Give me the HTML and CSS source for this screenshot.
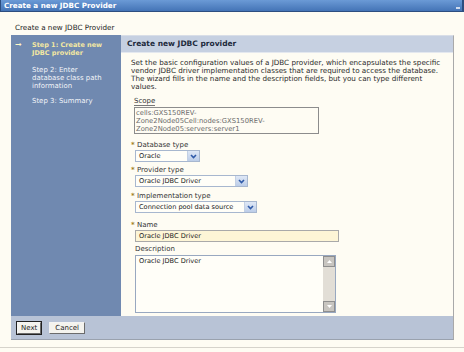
FILE: index.html
```html
<!DOCTYPE html>
<html>
<head>
<meta charset="utf-8">
<link rel="stylesheet" href="styles.css">
</head>
<body>
<div class="titlebar"><span>Create a new JDBC Provider</span><span class="tb-btn"></span></div>
<div class="subtitle">Create a new JDBC Provider</div>
<div class="wizard">
  <div class="wizard-body">
    <div class="sidebar">
      <div class="step current"><span class="arrow">&#10142;</span><span>Step 1: Create new JDBC provider</span></div>
      <div class="step"><span class="arrow"></span><span>Step 2: Enter database class path information</span></div>
      <div class="step"><span class="arrow"></span><span>Step 3: Summary</span></div>
    </div>
    <div class="main">
      <div class="main-header">Create new JDBC provider</div>
      <div class="content">
        <p class="intro">Set the basic configuration values of a JDBC provider, which encapsulates the specific vendor JDBC driver implementation classes that are required to access the database. The wizard fills in the name and the description fields, but you can type different values.</p>
        <div class="field scope">
          <div class="label plain"><span class="u">Scope</span></div>
          <div class="scopebox">cells:GXS150REV-<br>Zone2Node05Cell:nodes:GXS150REV-<br>Zone2Node05:servers:server1</div>
        </div>
        <div class="field f-db">
          <div class="label"><span class="req">*</span>Database type</div>
          <div class="select w-db"><span class="val">Oracle</span><span class="dd"><svg width="7" height="5" viewBox="0 0 7 5"><path d="M1 1 L3.5 3.5 L6 1" fill="none" stroke="#2f5aa8" stroke-width="1.6"/></svg></span></div>
        </div>
        <div class="field f-prov">
          <div class="label"><span class="req">*</span>Provider type</div>
          <div class="select w-prov"><span class="val">Oracle JDBC Driver</span><span class="dd"><svg width="7" height="5" viewBox="0 0 7 5"><path d="M1 1 L3.5 3.5 L6 1" fill="none" stroke="#2f5aa8" stroke-width="1.6"/></svg></span></div>
        </div>
        <div class="field f-impl">
          <div class="label"><span class="req">*</span>Implementation type</div>
          <div class="select w-impl"><span class="val">Connection pool data source</span><span class="dd"><svg width="7" height="5" viewBox="0 0 7 5"><path d="M1 1 L3.5 3.5 L6 1" fill="none" stroke="#2f5aa8" stroke-width="1.6"/></svg></span></div>
        </div>
        <div class="field f-name">
          <div class="label"><span class="req">*</span>Name</div>
          <div class="input">Oracle JDBC Driver</div>
        </div>
        <div class="field f-desc">
          <div class="label plain">Description</div>
          <div class="textarea">
            <div class="ta-text">Oracle JDBC Driver</div>
            <div class="scrollbar">
              <span class="sb-btn"><svg width="5" height="3" viewBox="0 0 5 3"><path d="M0 3 L2.5 0 L5 3 Z" fill="#fff"/></svg></span>
              <span class="sb-track"></span>
              <span class="sb-btn"><svg width="5" height="3" viewBox="0 0 5 3"><path d="M0 0 L2.5 3 L5 0 Z" fill="#fff"/></svg></span>
            </div>
          </div>
        </div>
      </div>
    </div>
  </div>
  <div class="footer">
    <span class="btn default">Next</span>
    <span class="btn">Cancel</span>
  </div>
</div>
<div class="bottomline"></div>
</body>
</html>
```

FILE: styles.css
```css
html, body {
  margin: 0;
  padding: 0;
}
body {
  width: 464px;
  height: 352px;
  overflow: hidden;
  background: #fefcf3;
  font-family: "DejaVu Sans", Verdana, sans-serif;
  font-size: 6.6px;
  color: #222;
}
.titlebar {
  height: 11px;
  line-height: 11px;
  background: linear-gradient(#6b9ad6, #4474b6);
  border-bottom: 1px solid #2d4e80;
  border-left: 1px solid #2d4e80;
  border-right: 2px solid #2d4e80;
  color: #fff;
  font-weight: bold;
  font-size: 7.2px;
  padding-left: 3px;
  display: flex;
  justify-content: space-between;
  align-items: center;
}
.tb-btn {
  width: 4px;
  height: 2px;
  margin-right: 2px;
  margin-top: 5px;
  background: #cfdcef;
}
.subtitle {
  padding: 11px 0 0 15px;
  font-size: 7.2px;
  line-height: 9px;
  color: #222;
}
.wizard {
  margin: 3px 0 0 11px;
  width: 443px;
  display: flex;
  flex-direction: column;
}
.wizard-body {
  display: flex;
  height: 281px;
}
.sidebar {
  width: 110px;
  background: #7089b0;
  padding-top: 6px;
  box-sizing: border-box;
}
.step {
  display: flex;
  color: #f2f4f8;
  font-size: 6.95px;
  line-height: 8px;
  margin-bottom: 7px;
}
.step .arrow {
  width: 21px;
  flex: none;
  padding-left: 4px;
  box-sizing: border-box;
  color: #fff8c8;
  font-size: 8px;
  line-height: 8px;
}
.step span:last-child {
  width: 76px;
}
.step.current {
  color: #f4e8a2;
  font-weight: bold;
  font-size: 6.5px;
  margin-bottom: 9px;
}
.main {
  flex: 1;
  display: flex;
  flex-direction: column;
  border-right: 1px solid #a9a9a9;
  border-top: 1px solid #d9dee7;
}
.main-header {
  height: 16px;
  line-height: 16px;
  background: #c6d0e1;
  border-bottom: 1px solid #e4e8ef;
  font-weight: bold;
  font-size: 7.5px;
  padding-left: 6px;
  color: #1d2a3c;
}
.content {
  padding: 6px 0 0 10px;
}
.intro {
  margin: 0;
  width: 313px;
  font-size: 7.2px;
  line-height: 8px;
  color: #2a2a2a;
}
.field {
  margin-top: 6px;
  font-size: 7px;
}
.scope {
  margin-top: 6px;
  padding-left: 3px;
}
.label {
  line-height: 8px;
  color: #333;
}
.label .u {
  border-bottom: 1px solid #777;
}
.req {
  display: inline-block;
  width: 6px;
  color: #a08020;
  font-weight: bold;
}
.field:not(.scope) .select, .field:not(.scope) .input, .field:not(.scope) .textarea {
  margin-left: 4px;
}
.label.plain {
  padding-left: 4px;
}
.scope .label.plain {
  padding-left: 0;
}
.scopebox {
  margin-top: 2px;
  width: 185px;
  height: 27px;
  border: 1px solid #8c8c8c;
  padding: 1px 0 0 1px;
  box-sizing: border-box;
  line-height: 8px;
  color: #6a6a6a;
  font-size: 6.8px;
  background: #fefcf3;
}
.select {
  margin-top: 1px;
  height: 12px;
  box-sizing: border-box;
  border: 1px solid #a7b7cf;
  background: #fffef8;
  display: flex;
  align-items: center;
  justify-content: space-between;
  padding-left: 3px;
  line-height: 10px;
  font-size: 6.6px;
  color: #222;
}
.dd {
  width: 11px;
  height: 10px;
  background: linear-gradient(#dfe8f6, #bccde8);
  border-left: 1px solid #c3d0e4;
  display: flex;
  align-items: center;
  justify-content: center;
}
.w-db { width: 65px; }
.w-prov { width: 113px; }
.w-impl { width: 122px; }
.f-db { margin-top: 7px; }
.f-prov { margin-top: 4px; }
.f-impl { margin-top: 5px; }
.f-name { margin-top: 8px; }
.f-desc { margin-top: 3px; }
.input {
  margin-top: 1px;
  width: 204px;
  height: 12px;
  box-sizing: border-box;
  border: 1px solid #a9a9a9;
  background: #fdf5d6;
  padding-left: 3px;
  line-height: 10px;
  font-size: 6.6px;
}
.textarea {
  margin-top: 2px;
  width: 201px;
  height: 58px;
  box-sizing: border-box;
  border: 1px solid #98a8c0;
  background: #fffef8;
  display: flex;
  font-size: 6.6px;
}
.ta-text {
  flex: 1;
  padding: 1px 0 0 3px;
  line-height: 8px;
}
.scrollbar {
  width: 12px;
  display: flex;
  flex-direction: column;
  background: #e2ded6;
}
.sb-btn {
  height: 11px;
  box-sizing: border-box;
  border: 1px solid #8e8e8e;
  background: #c8c5c0;
  display: flex;
  align-items: center;
  justify-content: center;
}
.sb-track {
  flex: 1;
}
.footer {
  height: 23px;
  background: #b8c3d6;
  border-bottom: 1px solid #9aa2ae;
  border-right: 1px solid #a9a9a9;
  display: flex;
  align-items: center;
  padding-left: 6px;
  gap: 8px;
}
.btn {
  height: 12px;
  box-sizing: border-box;
  border: 1px solid #f4f4f4;
  border-right-color: #6b6b6b;
  border-bottom-color: #6b6b6b;
  background: #f4f3ee;
  font-size: 7px;
  line-height: 10px;
  padding: 0 5px;
  color: #222;
}
.btn.default {
  outline: 1px solid #222;
  padding: 0 3px;
}
.bottomline {
  margin-top: 7px;
  height: 1px;
  background: #d6d3cb;
}
```
